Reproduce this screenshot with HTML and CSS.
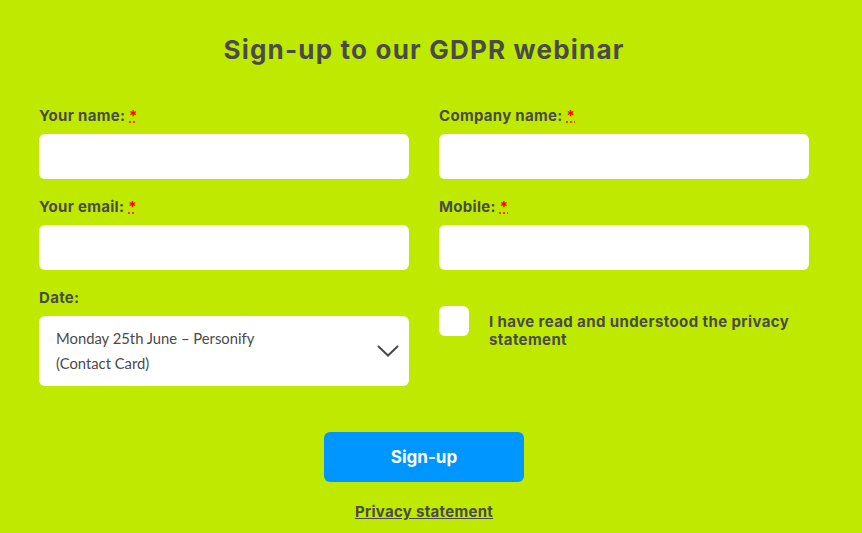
FILE: index.html
```html
<!DOCTYPE html>
<html lang="en">
<head>
<meta charset="utf-8">
<title>Sign-up to our GDPR webinar</title>
<link rel="stylesheet" href="styles.css">
</head>
<body>
<main class="page">
  <h1 class="title">Sign-up to our GDPR webinar</h1>
  <form class="form">
    <div class="grid">
      <div class="field">
        <label class="label">Your name: <abbr class="req" title="required">*</abbr></label>
        <div class="input"></div>
      </div>
      <div class="field">
        <label class="label">Company name: <abbr class="req" title="required">*</abbr></label>
        <div class="input"></div>
      </div>
      <div class="field">
        <label class="label">Your email: <abbr class="req" title="required">*</abbr></label>
        <div class="input"></div>
      </div>
      <div class="field">
        <label class="label">Mobile: <abbr class="req" title="required">*</abbr></label>
        <div class="input"></div>
      </div>
      <div class="field">
        <label class="label">Date:</label>
        <div class="select">
          <span class="select-text">Monday 25th June – Personify (Contact Card)</span>
          <svg class="chevron" width="22" height="12" viewBox="0 0 22 12"><path d="M1 1 L11 10.5 L21 1" fill="none" stroke="#4a4a4a" stroke-width="2"/></svg>
        </div>
      </div>
      <div class="field check-field">
        <span class="checkbox"></span>
        <span class="check-label">I have read and understood the privacy statement</span>
      </div>
    </div>
    <div class="actions">
      <button type="button" class="btn">Sign-up</button>
      <a class="privacy" href="#">Privacy statement</a>
    </div>
  </form>
</main>
</body>
</html>
```
FILE: styles.css
```css
html, body {
  margin: 0;
  padding: 0;
  background: #bfea00;
}
body {
  font-family: "Inter", "Lato", sans-serif;
  color: #4a4a4a;
  width: 862px;
  height: 533px;
  overflow: hidden;
}
.page {
  padding: 0 53px 0 39px;
}
.title {
  margin: 0;
  padding-top: 34px;
  font-size: 26px;
  line-height: 32px;
  font-weight: 700;
  letter-spacing: 1.2px;
  text-align: center;
}
.form {
  margin-top: 39px;
}
.grid {
  display: grid;
  grid-template-columns: 370px 370px;
  column-gap: 30px;
  row-gap: 17px;
}
.field {
  display: flex;
  flex-direction: column;
}
.label {
  font-size: 15px;
  line-height: 22px;
  font-weight: 700;
  letter-spacing: 0.3px;
  margin-bottom: 7px;
}
.req {
  color: #ff0000;
  text-decoration: underline dotted #ff0000;
  border: none;
}
.input {
  height: 45px;
  background: #fff;
  border-radius: 6px;
}
.select {
  height: 70px;
  background: #fff;
  border-radius: 6px;
  display: flex;
  align-items: center;
  padding: 0 10px 0 17px;
  box-sizing: border-box;
}
.select-text {
  width: 230px;
  font-family: "Lato", sans-serif;
  font-size: 14.8px;
  line-height: 25px;
  font-weight: 400;
}
.chevron {
  margin-left: auto;
  margin-bottom: 1px;
}
.check-field {
  flex-direction: row;
  align-items: flex-start;
  padding-top: 19px;
}
.checkbox {
  width: 30px;
  height: 30px;
  background: #fff;
  border-radius: 6px;
  flex: none;
}
.check-label {
  margin-left: 20px;
  margin-top: 7px;
  font-size: 15px;
  line-height: 18px;
  font-weight: 700;
  letter-spacing: 0.4px;
  width: 320px;
}
.actions {
  display: flex;
  flex-direction: column;
  align-items: center;
  margin-top: 46px;
}
.btn {
  width: 200px;
  height: 50px;
  border: none;
  border-radius: 6px;
  background: #0096ff;
  color: #fff;
  font-family: inherit;
  font-size: 17px;
  font-weight: 700;
}
.privacy {
  margin-top: 19px;
  font-size: 15px;
  line-height: 22px;
  font-weight: 700;
  letter-spacing: 0.3px;
  color: #4a4a4a;
}
```
